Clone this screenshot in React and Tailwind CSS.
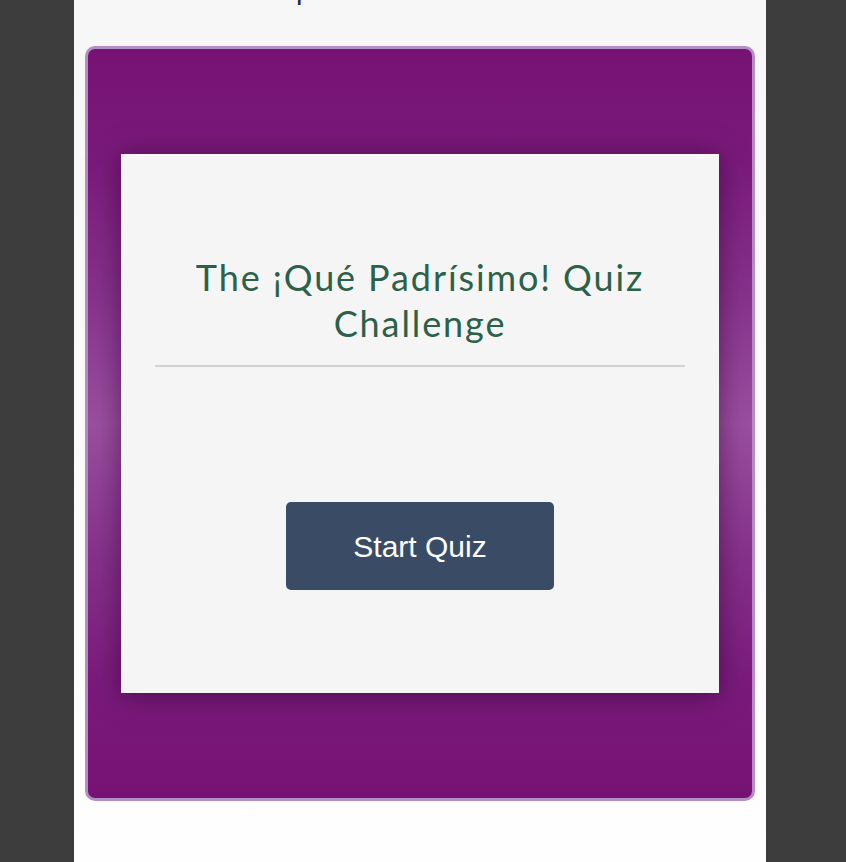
export default function App() {
  return (
    <div className="min-h-[862px] bg-[#3d3d3d]">
      <div className="ml-[74px] w-[692px] min-h-[862px] bg-[linear-gradient(to_bottom,#f7f7f8,#fefefe)] pt-[46px] px-[11px] relative overflow-hidden">
        <div className="absolute left-[222px] top-[-25px] leading-none text-[#2a2540] text-[28px] font-['Lato',sans-serif]">p</div>
        <div className="h-[755px] rounded-[10px] border-[3px] border-[#b38dc6] bg-[linear-gradient(to_bottom,#771275_0%,#7a1a7b_15%,#86318b_32%,#9a4fa0_50%,#86318b_68%,#7a1a7b_85%,#771275_100%)] flex items-center justify-center">
          <div className="w-[598px] h-[539px] bg-[#f5f5f5] shadow-[0_2px_26px_rgba(40,0,40,0.55)] px-[34px] pt-[100px] flex flex-col items-stretch">
            <h1 className="text-center text-[36px] leading-[46px] text-[#2b6149] font-['Lato',sans-serif] font-normal tracking-[1.9px]">
              The ¡Qué Padrísimo! Quiz<br />Challenge
            </h1>
            <div className="mt-[19px] h-[2px] bg-[#d2d2d2]" />
            <div className="flex justify-center mt-[135px]">
              <button className="w-[268px] h-[88px] rounded-[5px] bg-[#3a4b66] text-white text-[30px] font-['Liberation_Sans',Arial,sans-serif]">
                Start Quiz
              </button>
            </div>
          </div>
        </div>
      </div>
    </div>
  );
}
